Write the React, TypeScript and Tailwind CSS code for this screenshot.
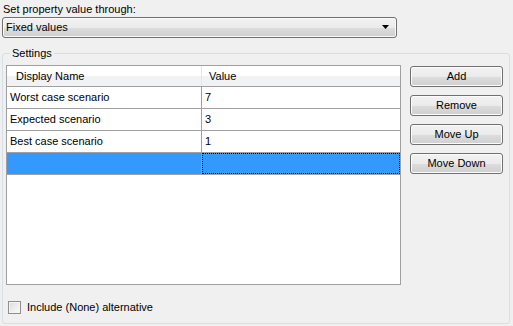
import React from 'react';

const rows = [
  { name: 'Worst case scenario', value: '7' },
  { name: 'Expected scenario', value: '3' },
  { name: 'Best case scenario', value: '1' },
];

const buttons = ['Add', 'Remove', 'Move Up', 'Move Down'];

function WinButton({ label }: { label: string }) {
  return (
    <button className="h-[21px] w-[93px] rounded-[3px] border border-[#707070] bg-[linear-gradient(to_bottom,#f2f2f2_0%,#ebebeb_50%,#dddddd_51%,#cfcfcf_100%)] text-[11px] leading-none text-black shadow-[inset_0_0_0_1px_#fcfcfc]">
      {label}
    </button>
  );
}

export default function App() {
  return (
    <div className="w-[513px] h-[326px] overflow-hidden bg-[#f0f0f0] text-[11px] leading-[13px] text-black font-['Liberation_Sans',Arial,sans-serif]">
      <div className="pl-[3px] pt-[3px] h-[17px]">Set property value through:</div>

      <div className="ml-[2px] flex h-[21px] w-[395px] items-center justify-between rounded-[3px] border border-[#707070] bg-[linear-gradient(to_bottom,#f2f2f2_0%,#ebebeb_50%,#dddddd_51%,#cfcfcf_100%)] pl-[3px] pr-[6px] shadow-[inset_0_0_0_1px_#fafafa]">
        <span>Fixed values</span>
        <svg width="8" height="5" viewBox="0 0 8 5"><path d="M0 0h7l-3.5 4z" fill="#000" /></svg>
      </div>

      <fieldset className="ml-[2px] mt-[9px] h-[277px] w-[508px] rounded-[3px] border border-[#d5dfe5] px-[3px] pb-0 pt-0">
        <legend className="ml-[4px] px-[2px] leading-[13px]">Settings</legend>

        <div className="mt-[5px] flex gap-[9px]">
          <div className="h-[220px] w-[395px] border border-[#a0a0a0] bg-white">
            <div className="flex h-[21px] border-b border-[#a0a0a0] bg-[linear-gradient(to_bottom,#ffffff_0%,#ffffff_50%,#f1f2f4_51%,#f1f2f4_100%)]">
              <div className="w-[195px] border-r border-[#e3e5e7] pl-[9px] pt-[4px]">Display Name</div>
              <div className="flex-1 pl-[7px] pt-[4px]">Value</div>
            </div>
            {rows.map(r => (
              <div key={r.name} className="flex h-[22px] border-b border-[#a0a0a0]">
                <div className="w-[195px] border-r border-[#a0a0a0] pl-[3px] pt-[4px]">{r.name}</div>
                <div className="flex-1 pl-[3px] pt-[4px]">{r.value}</div>
              </div>
            ))}
            <div className="flex h-[22px] border-b border-[#a0a0a0] bg-[#3399ff]">
              <div className="w-[195px] border-r border-[#a0a0a0]" />
              <div className="flex-1 border border-dotted border-black" />
            </div>
          </div>

          <div className="mt-[1px] flex flex-col gap-[8px]">
            {buttons.map(b => <WinButton key={b} label={b} />)}
          </div>
        </div>

        <label className="mt-[16px] flex items-center gap-[6px] pl-[2px]">
          <span className="h-[13px] w-[13px] border border-[#8e8f8f] bg-[linear-gradient(135deg,#dcdcdc_0%,#fbfbfb_100%)] shadow-[inset_0_0_0_1px_#f4f4f4]" />
          <span>Include (None) alternative</span>
        </label>
      </fieldset>
    </div>
  );
}
